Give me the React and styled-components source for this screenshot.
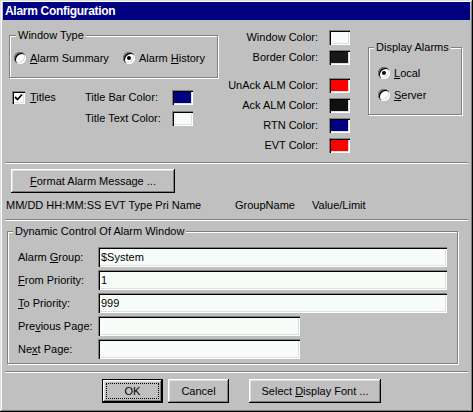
import styled, { createGlobalStyle } from "styled-components";

const GlobalStyle = createGlobalStyle`
  html, body {
    margin: 0;
    padding: 0;
    background: #c0c0c0;
  }
  body {
    font-family: "Liberation Sans", Arial, sans-serif;
    font-size: 11px;
    color: #000;
  }
`;

const sunken = `
  box-shadow: inset 1px 1px 0 #808080, inset 2px 2px 0 #000,
    inset -1px -1px 0 #fff, inset -2px -2px 0 #dfdfdf;
`;

function App() {
  return (
    <>
      <GlobalStyle />
      <Window>
        <TitleBar>Alarm Configuration</TitleBar>
        <Body>
          <TopSection>
            <LeftCol>
              <Group $height={43} $top={8}>
                <Caption $left={6}>Window Type</Caption>
                <RadioRow>
                  <RadioItem $width={109}>
                    <Radio />
                    <span>
                      <U>A</U>larm Summary
                    </span>
                  </RadioItem>
                  <RadioItem>
                    <Radio $checked />
                    <span>
                      Alarm <U>H</U>istory
                    </span>
                  </RadioItem>
                </RadioRow>
              </Group>
              <TitlesGrid>
                <CheckItem>
                  <CheckBox>
                    <svg width="9" height="9" viewBox="0 0 9 9">
                      <polyline
                        points="1,4 3.5,6.5 8,1.5"
                        fill="none"
                        stroke="#000"
                        strokeWidth="1.8"
                      />
                    </svg>
                  </CheckBox>
                  <span>
                    <U>T</U>itles
                  </span>
                </CheckItem>
                <span>Title Bar Color:</span>
                <Swatch $color="#000080" />
                <span />
                <span>Title Text Color:</span>
                <Swatch $color="#f8fcf8" />
              </TitlesGrid>
            </LeftCol>

            <ColorCol>
              <ColorRow>
                Window Color:
                <Swatch $color="#f8fcf8" />
              </ColorRow>
              <ColorRow $after={8}>
                Border Color:
                <Swatch $color="#181818" />
              </ColorRow>
              <ColorRow>
                UnAck ALM Color:
                <Swatch $color="#ff0000" />
              </ColorRow>
              <ColorRow>
                Ack ALM Color:
                <Swatch $color="#101010" />
              </ColorRow>
              <ColorRow>
                RTN Color:
                <Swatch $color="#000080" />
              </ColorRow>
              <ColorRow>
                EVT Color:
                <Swatch $color="#ff0000" />
              </ColorRow>
            </ColorCol>

            <DisplayGroup>
              <Caption $left={5}>Display Alarms</Caption>
              <RadioItem>
                <Radio $checked />
                <span>
                  <U>L</U>ocal
                </span>
              </RadioItem>
              <RadioItem>
                <Radio />
                <span>
                  <U>S</U>erver
                </span>
              </RadioItem>
            </DisplayGroup>
          </TopSection>

          <Separator $top={7} />
          <Button $width={164} $ml={6} style={{ marginTop: 5 }}>
            <U>F</U>ormat Alarm Message ...
          </Button>
          <HeaderRow>
            <span>MM/DD HH:MM:SS EVT Type Pri Name</span>
            <span>GroupName</span>
            <span>Value/Limit</span>
          </HeaderRow>
          <Separator $top={7} />

          <DynamicGroup>
            <Caption $left={5}>Dynamic Control Of Alarm Window</Caption>
            <FieldRow>
              <span>
                Alarm <U>G</U>roup:
              </span>
              <TextField $width={349} defaultValue="$System" />
            </FieldRow>
            <FieldRow>
              <span>
                <U>F</U>rom Priority:
              </span>
              <TextField $width={349} defaultValue="1" />
            </FieldRow>
            <FieldRow>
              <span>
                <U>T</U>o Priority:
              </span>
              <TextField $width={349} defaultValue="999" />
            </FieldRow>
            <FieldRow>
              <span>
                Pre<U>v</U>ious Page:
              </span>
              <TextField $width={202} defaultValue="" />
            </FieldRow>
            <FieldRow>
              <span>
                Ne<U>x</U>t Page:
              </span>
              <TextField $width={202} defaultValue="" />
            </FieldRow>
          </DynamicGroup>

          <Separator $top={7} />
          <ButtonRow>
            <Button $width={61} $default>
              OK
            </Button>
            <Button $width={61} $ml={5}>
              Cancel
            </Button>
            <Button $width={132} $ml={20}>
              Select <U>D</U>isplay Font ...
            </Button>
          </ButtonRow>
        </Body>
      </Window>
    </>
  );
}

const Window = styled.div`
  width: 473px;
  height: 412px;
  box-sizing: border-box;
  padding: 2px 3px;
  background: #c0c0c0;
  box-shadow: inset -1px -1px 0 #000, inset 1px 1px 0 #dfdfdf,
    inset -2px -2px 0 #808080, inset 2px 2px 0 #fff;
  display: flex;
  flex-direction: column;
`;

const TitleBar = styled.div`
  height: 18px;
  line-height: 18px;
  padding-left: 2px;
  background: #000080;
  color: #fff;
  font-weight: 700;
  font-size: 12px;
  letter-spacing: -0.3px;
`;

const Body = styled.div`
  padding: 0 2px;
  display: flex;
  flex-direction: column;
  line-height: 13px;
`;

const U = styled.span`
  text-decoration: underline;
`;

const TopSection = styled.div`
  display: flex;
  align-items: flex-start;
  margin-top: 7px;
`;

const LeftCol = styled.div`
  margin-left: 4px;
  width: 209px;
  display: flex;
  flex-direction: column;
`;

const Group = styled.div`
  position: relative;
  box-sizing: border-box;
  height: ${(p) => p.$height}px;
  margin-top: ${(p) => p.$top}px;
  border: 1px solid #808080;
  box-shadow: 1px 1px 0 #fff, inset 1px 1px 0 #fff;
`;

const Caption = styled.span`
  position: absolute;
  top: -7px;
  left: ${(p) => p.$left}px;
  padding: 0 2px;
  background: #c0c0c0;
  line-height: 13px;
  white-space: nowrap;
`;

const RadioRow = styled.div`
  display: flex;
  padding: 14px 0 0 4px;
`;

const RadioItem = styled.label`
  display: flex;
  align-items: center;
  gap: 4px;
  height: 16px;
  width: ${(p) => (p.$width ? `${p.$width}px` : "auto")};
`;

const Radio = styled.span`
  flex: none;
  width: 12px;
  height: 12px;
  border-radius: 50%;
  background: #fff;
  box-shadow: inset 1px 1px 0 #808080, inset 2px 2px 0 #000,
    inset -1px -1px 0 #fff, inset -2px -2px 0 #dfdfdf;
  display: flex;
  align-items: center;
  justify-content: center;
  &::after {
    content: "";
    display: ${(p) => (p.$checked ? "block" : "none")};
    width: 4px;
    height: 4px;
    border-radius: 50%;
    background: #000;
  }
`;

const TitlesGrid = styled.div`
  display: grid;
  grid-template-columns: 73px 87px 21px;
  grid-auto-rows: 20px;
  row-gap: 1px;
  align-items: center;
  margin: 9px 0 0 3px;
`;

const CheckItem = styled.label`
  display: flex;
  align-items: center;
  gap: 5px;
`;

const CheckBox = styled.span`
  width: 13px;
  height: 13px;
  background: #fff;
  ${sunken}
  display: flex;
  align-items: center;
  justify-content: center;
`;

const Swatch = styled.span`
  flex: none;
  width: 21px;
  height: 15px;
  background: ${(p) => p.$color};
  ${sunken}
`;

const ColorCol = styled.div`
  width: 132px;
  display: flex;
  flex-direction: column;
`;

const ColorRow = styled.div`
  height: 20px;
  display: flex;
  align-items: center;
  justify-content: flex-end;
  gap: 11px;
  white-space: nowrap;
  margin-bottom: ${(p) => p.$after || 0}px;
`;

const DisplayGroup = styled(Group).attrs({ $height: 68, $top: 20 })`
  margin-left: 18px;
  width: 94px;
  padding: 17px 0 0 9px;
  display: flex;
  flex-direction: column;
  gap: 6px;
`;

const Separator = styled.div`
  height: 2px;
  box-sizing: border-box;
  border-top: 1px solid #808080;
  border-bottom: 1px solid #fff;
  margin-top: ${(p) => p.$top}px;
`;

const Button = styled.button`
  position: relative;
  flex: none;
  box-sizing: border-box;
  width: ${(p) => p.$width}px;
  height: 24px;
  margin-left: ${(p) => p.$ml || 0}px;
  padding: 0;
  font: inherit;
  color: #000;
  background: #c0c0c0;
  border: ${(p) => (p.$default ? "1px solid #000" : "none")};
  box-shadow: inset -1px -1px 0 #000, inset 1px 1px 0 #fff,
    inset -2px -2px 0 #808080, inset 2px 2px 0 #dfdfdf;
  ${(p) =>
    p.$default &&
    `
    &::after {
      content: "";
      position: absolute;
      inset: 3px;
      border: 1px dotted #000;
    }
  `}
`;

const HeaderRow = styled.div`
  display: grid;
  grid-template-columns: 229px 77px auto;
  margin: 6px 0 0 1px;
  white-space: nowrap;
`;

const DynamicGroup = styled(Group).attrs({ $height: 133, $top: 10 })`
  margin-left: 2px;
  width: 451px;
  padding: 15px 0 0 10px;
  display: flex;
  flex-direction: column;
  gap: 3px;
`;

const FieldRow = styled.div`
  display: grid;
  grid-template-columns: 80px auto;
  align-items: center;
  height: 20px;
`;

const TextField = styled.input`
  width: ${(p) => p.$width}px;
  height: 20px;
  box-sizing: border-box;
  border: none;
  outline: none;
  padding: 0 3px;
  font: inherit;
  color: #000;
  background: #f8fcf8;
  ${sunken}
`;

const ButtonRow = styled.div`
  display: flex;
  margin: 6px 0 0 97px;
`;

export default App;
